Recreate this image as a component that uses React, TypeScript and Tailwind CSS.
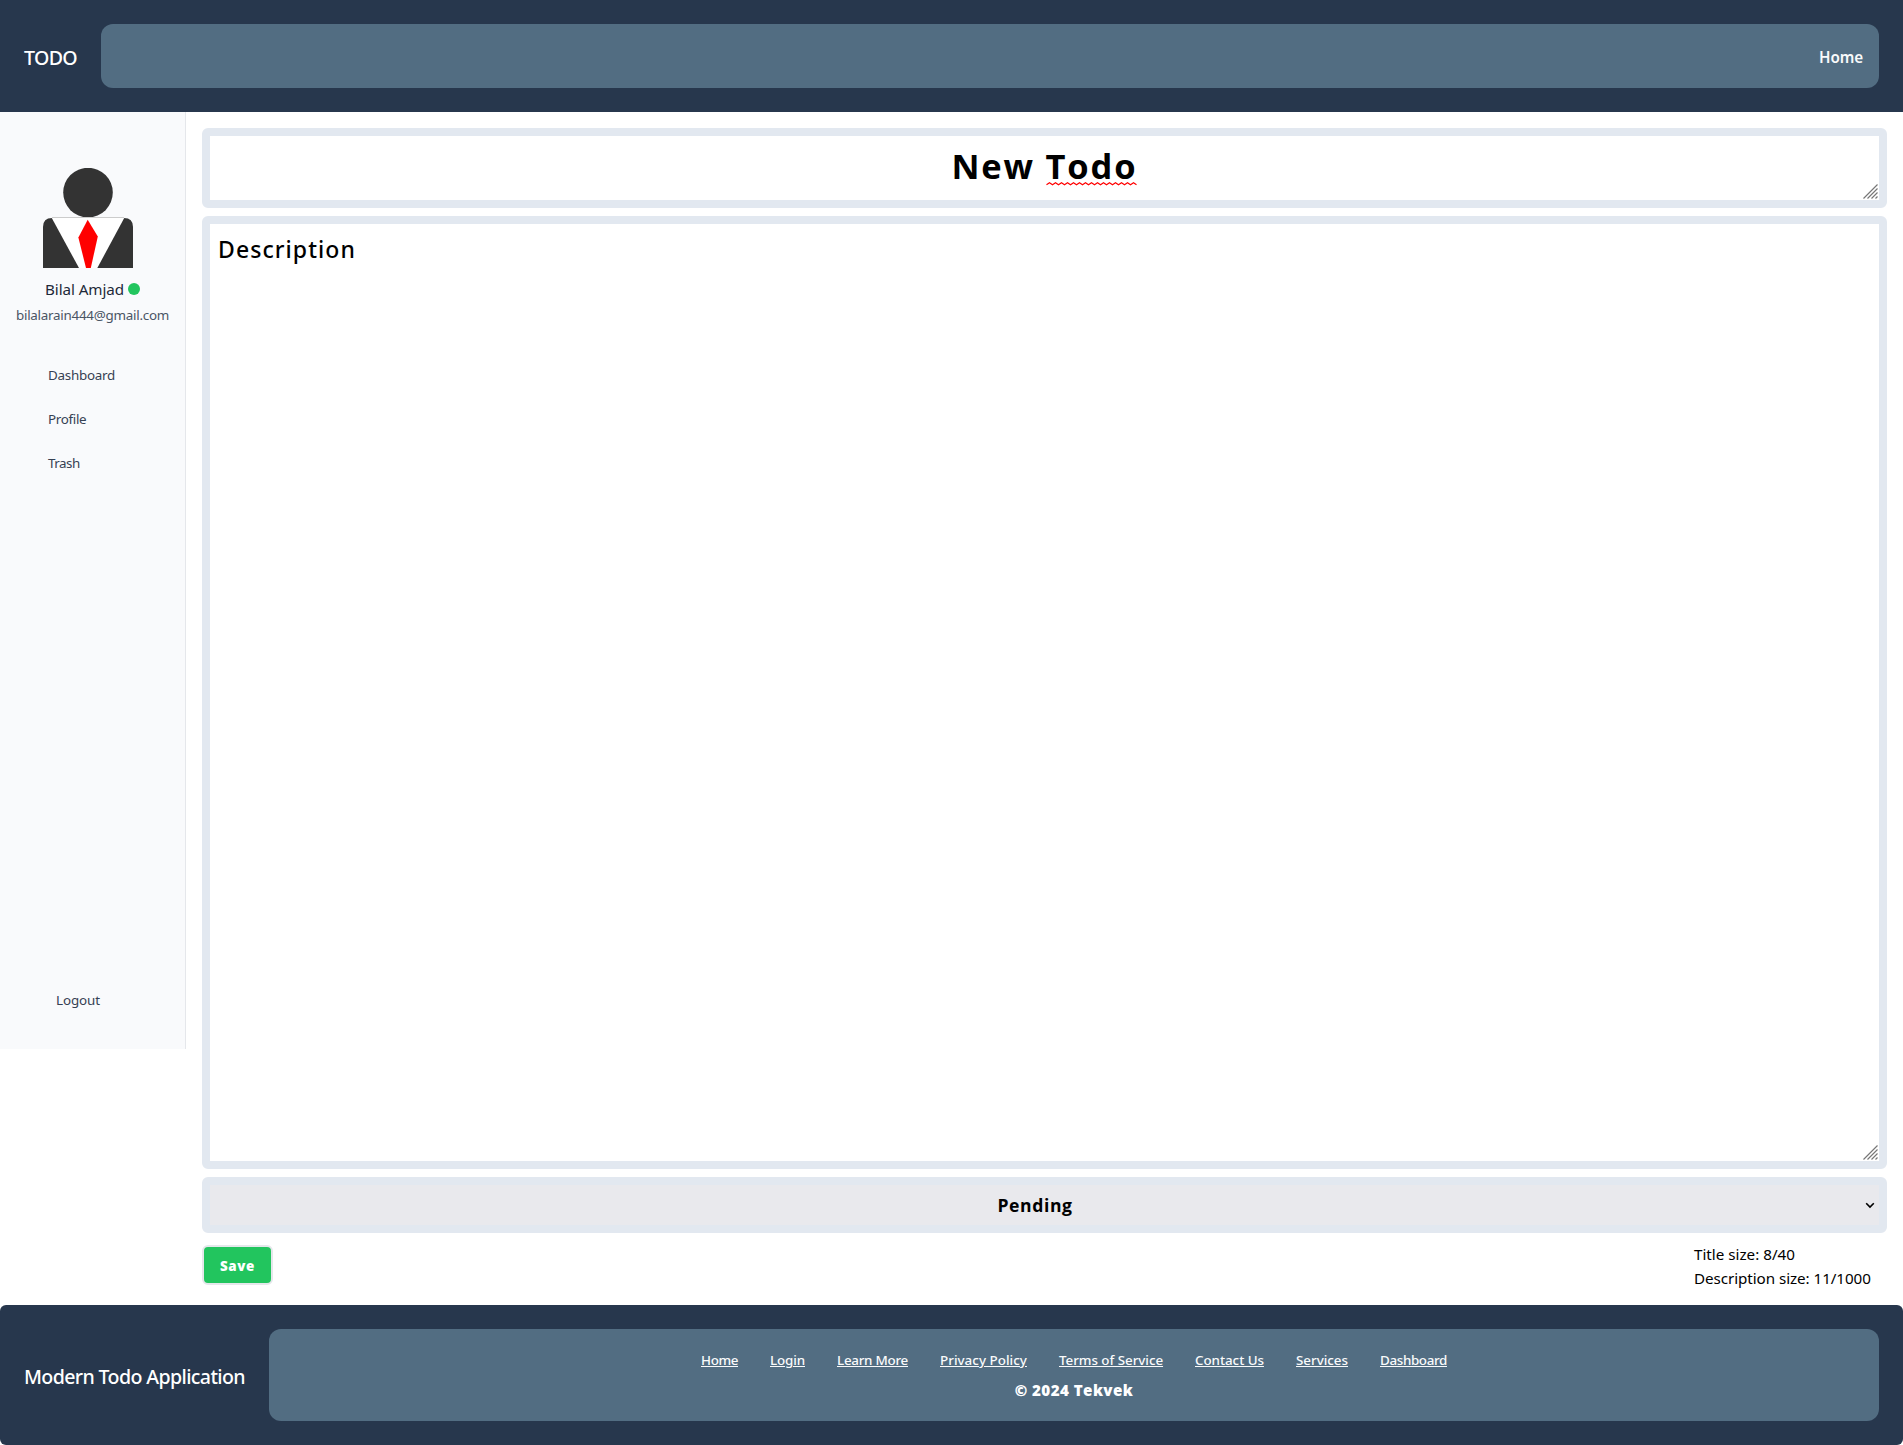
import React from "react";

const footerLinks = [
  { label: "Home", style: "w-[37px] tracking-[-0.39px]" },
  { label: "Login", style: "w-[35px] tracking-[-0.13px]" },
  { label: "Learn More", style: "w-[71px] tracking-[-0.26px]" },
  { label: "Privacy Policy", style: "w-[87px] tracking-[0.03px]" },
  { label: "Terms of Service", style: "w-[104px] tracking-[-0.04px]" },
  { label: "Contact Us", style: "w-[69px] tracking-[-0.05px]" },
  { label: "Services", style: "w-[52px] tracking-[-0.02px]" },
  { label: "Dashboard", style: "w-[67px] tracking-[-0.36px]" },
];

const menu = [
  { label: "Dashboard", style: "tracking-[-0.26px]" },
  { label: "Profile", style: "tracking-[-0.33px]" },
  { label: "Trash", style: "tracking-[-0.5px]" },
];

function Avatar() {
  return (
    <svg width="90" height="100" viewBox="0 0 90 100" className="block">
      <circle cx="45" cy="24.6" r="24.8" fill="#333" />
      <path d="M0 100V59Q0 50 9 50H81Q90 50 90 59V100Z" fill="#333" />
      <path d="M8.5 49.6H81.5L54.3 100H36Z" fill="#fff" />
      <path d="M9 49.5H81" stroke="#ccc" strokeWidth="1" />
      <path d="M44.7 51.7L54.8 68.5L47.8 100H43L35.4 69.5Z" fill="#f00" />
    </svg>
  );
}

function ResizeGrip() {
  return (
    <svg width="15" height="15" viewBox="0 0 15 15" className="pointer-events-none absolute right-[9px] bottom-[9px]">
      <path d="M0.5 14.5L14.5 0.5M4.5 14.5L14.5 4.5M8.5 14.5L14.5 8.5M12.5 14.5L14.5 12.5" stroke="#777" strokeWidth="1.2" fill="none" />
    </svg>
  );
}

function Squiggle() {
  const points = Array.from({ length: 31 }, (_, i) => `${i * 3 + 0.5},${i % 2 ? 0.8 : 2.8}`).join(" ");
  return (
    <svg width="92" height="4" viewBox="0 0 92 4" className="pointer-events-none absolute top-10 left-0">
      <polyline points={points} fill="none" stroke="#f00" strokeWidth="1.2" />
    </svg>
  );
}

function Sidebar() {
  return (
    <aside className="flex h-[937px] w-[186px] flex-none flex-col border-r border-gray-200 bg-[#f9fafc] pt-14">
      <div className="ml-[43px]">
        <Avatar />
      </div>
      <div className="mt-[9px] flex h-6 items-center pl-[45px] text-[15.2px] tracking-[-0.07px] text-gray-800">
        <span className="w-[79px] whitespace-nowrap">Bilal Amjad</span>
        <span className="ml-1 size-3 rounded-full bg-[#22c55e]" />
      </div>
      <div className="mt-1 pl-4 text-[13.4px] leading-5 tracking-[-0.26px] whitespace-nowrap text-gray-600">
        bilalarain444@gmail.com
      </div>
      <nav className="mt-7 flex flex-col">
        {menu.map((m) => (
          <a key={m.label} className={`flex h-11 items-center pl-12 text-[13.4px] text-gray-700 ${m.style}`}>
            {m.label}
          </a>
        ))}
      </nav>
      <button className="mt-auto mb-[39px] pl-14 text-left text-[13.4px] leading-5 tracking-[-0.1px] text-gray-700">Logout</button>
    </aside>
  );
}

export default function App() {
  return (
    <div className="flex h-[1445px] w-full flex-col bg-white font-['Noto_Sans','Open_Sans',sans-serif]">
      <header className="flex h-28 flex-none items-center gap-6 bg-[#27374d] px-6">
        <h1 className="w-[53px] pt-[3px] text-[19.6px] leading-7 font-medium tracking-[-0.65px] whitespace-nowrap text-white">TODO</h1>
        <nav className="flex h-16 flex-1 items-center justify-end rounded-xl bg-[#526d82] px-4">
          <a className="pt-0.5 text-[15.2px] font-semibold tracking-[-0.08px] text-gray-50">Home</a>
        </nav>
      </header>

      <div className="flex flex-1 items-start">
        <Sidebar />
        <main className="flex h-full flex-1 flex-col px-4 pt-4">
          <div className="relative h-20 flex-none rounded-md border-8 border-slate-200 bg-white pt-[6px] text-center font-['Open_Sans','Noto_Sans',sans-serif] text-[34.5px] leading-[48px] font-bold whitespace-pre text-black">
            <span className="tracking-[1.75px]">New </span>
            <span className="relative inline-block tracking-[1.85px]">
              Todo
              <Squiggle />
            </span>
            <div className="absolute right-[-8px] bottom-[-8px]">
              <ResizeGrip />
            </div>
          </div>

          <div className="relative mt-2 h-[953px] flex-none rounded-md border-8 border-slate-200 bg-white px-2 pt-[9px] text-[23px] leading-8 font-medium tracking-[1.07px] text-black">
            Description
            <div className="absolute right-[-8px] bottom-[-8px]">
              <ResizeGrip />
            </div>
          </div>

          <div className="mt-2 flex h-14 flex-none items-center rounded-md border-8 border-slate-200 bg-[#e9e9ed] pr-1 font-['Open_Sans','Noto_Sans',sans-serif] text-[17.6px] font-bold tracking-[0.6px] text-black">
            <span className="flex-1 pr-[5px] text-center">Pending</span>
            <svg width="10" height="7" viewBox="0 0 10 7" className="mt-px">
              <path d="M1.2 1.2L5 5L8.8 1.2" fill="none" stroke="#000" strokeWidth="1.6" />
            </svg>
          </div>

          <div className="flex items-start justify-between pt-2">
            <button className="mt-1 flex h-10 w-[71px] items-center justify-center rounded-md border-2 border-gray-200 bg-[#22c55e] pt-0.5 font-['Open_Sans','Noto_Sans',sans-serif] text-[13.4px] font-extrabold tracking-[0.62px] text-white">
              Save
            </button>
            <div className="w-[193px] pt-px text-[15.2px] leading-6 whitespace-nowrap text-black">
              <p>Title size: 8/40</p>
              <p className="tracking-[-0.06px]">Description size: 11/1000</p>
            </div>
          </div>
        </main>
      </div>

      <footer className="flex h-[140px] flex-none items-center gap-6 rounded-md bg-[#27374d] px-6">
        <h2 className="w-[221px] pt-1 text-[19.6px] leading-7 font-medium tracking-[-0.63px] whitespace-nowrap text-white">
          Modern Todo Application
        </h2>
        <div className="flex h-[92px] flex-1 flex-col items-center rounded-xl bg-[#526d82] pt-[19px]">
          <nav className="flex gap-8 text-[13.4px] leading-6 font-medium text-gray-50">
            {footerLinks.map((l) => (
              <a key={l.label} className={`whitespace-nowrap underline underline-offset-1 ${l.style}`}>
                {l.label}
              </a>
            ))}
          </nav>
          <p className="mt-1.5 font-['Open_Sans','Noto_Sans',sans-serif] text-[15.2px] leading-6 font-extrabold tracking-[0.42px] text-white">
            © 2024 Tekvek
          </p>
        </div>
      </footer>
    </div>
  );
}
